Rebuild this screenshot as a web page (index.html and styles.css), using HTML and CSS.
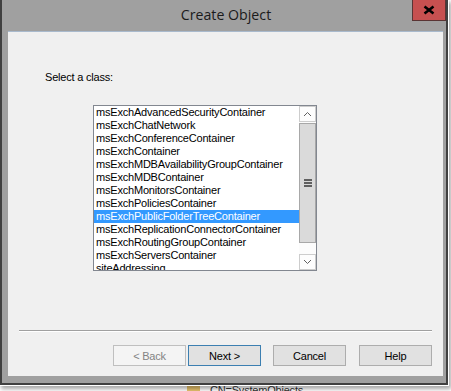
FILE: index.html
```html
<!DOCTYPE html>
<html lang="en">
<head>
    <meta charset="UTF-8">
    <meta name="viewport" content="width=device-width, initial-scale=1.0">
    <title>Create Object</title>
    <link rel="stylesheet" href="styles.css">
</head>
<body>
    <!-- Dialog window -->
    <div class="window">
        <div class="titlebar">
            <span class="title">Create Object</span>
            <button class="close" aria-label="Close">
                <svg width="34" height="21" viewBox="0 0 34 21">
                    <path d="M12.5 7.5 L21.5 14.5 M21.5 7.5 L12.5 14.5" stroke="#000" stroke-width="2.6" fill="none"/>
                </svg>
            </button>
        </div>

        <div class="panel">
            <div class="label">Select a class:</div>

            <div class="listbox">
                <ul class="items">
                    <li>msExchAdvancedSecurityContainer</li>
                    <li>msExchChatNetwork</li>
                    <li>msExchConferenceContainer</li>
                    <li>msExchContainer</li>
                    <li>msExchMDBAvailabilityGroupContainer</li>
                    <li>msExchMDBContainer</li>
                    <li>msExchMonitorsContainer</li>
                    <li>msExchPoliciesContainer</li>
                    <li class="selected">msExchPublicFolderTreeContainer</li>
                    <li>msExchReplicationConnectorContainer</li>
                    <li>msExchRoutingGroupContainer</li>
                    <li>msExchServersContainer</li>
                    <li>siteAddressing</li>
                </ul>
                <div class="scrollbar">
                    <div class="arrow">
                        <svg width="7" height="4" viewBox="0 0 7 4">
                            <polyline points="0,4 3.5,0.5 7,4" stroke="#606060" stroke-width="1" fill="none"/>
                        </svg>
                    </div>
                    <div class="thumb">
                        <svg width="8" height="8" viewBox="0 0 8 8">
                            <rect x="0" y="0" width="8" height="2" fill="#606060"/>
                            <rect x="0" y="3" width="8" height="2" fill="#606060"/>
                            <rect x="0" y="6" width="8" height="2" fill="#606060"/>
                        </svg>
                    </div>
                    <div class="arrow down">
                        <svg width="7" height="4" viewBox="0 0 7 4">
                            <polyline points="0,0 3.5,3.5 7,0" stroke="#606060" stroke-width="1" fill="none"/>
                        </svg>
                    </div>
                </div>
            </div>

            <div class="separator"></div>

            <div class="buttons">
                <button class="btn" disabled>&lt; Back</button>
                <button class="btn default">Next &gt;</button>
                <button class="btn cancel">Cancel</button>
                <button class="btn help">Help</button>
            </div>
        </div>
    </div>

    <!-- Bit of the window behind -->
    <div class="behind">
        <span class="folder"></span>
        <span class="behind-text">CN=SystemObjects</span>
    </div>
</body>
</html>
```

FILE: styles.css
```css
/* Reset */
* {
    margin: 0;
    padding: 0;
    box-sizing: border-box;
}

body {
    font-family: "Liberation Sans", Arial, sans-serif;
    font-size: 11px;
    letter-spacing: -0.2px;
    background-color: #fff;
    color: #000;
    overflow: hidden;
}

/* Window frame */
.window {
    width: 448px;
    height: 385px;
    background-color: #a0a0a0;
    border: 2px solid #404040;
    border-top: none;
    padding: 0 3px 7px 6px;
    display: flex;
    flex-direction: column;
    box-shadow: 0 0 0 1px #fff, 2px 3px 4px 1px rgba(0, 0, 0, 0.35);
    position: relative;
    z-index: 1;
}

.titlebar {
    height: 31px;
    position: relative;
    margin-left: -6px;
    margin-right: -3px;
    text-align: center;
    padding-left: 4px;
}

.title {
    font-family: "Open Sans", sans-serif;
    font-size: 14.2px;
    letter-spacing: 0;
    line-height: 30px;
    color: #1b1b1b;
}

.close {
    position: absolute;
    top: 0;
    right: 0;
    width: 34px;
    height: 21px;
    background-color: #c75050;
    border: 1px solid #5a3434;
    border-top: none;
}

.close svg {
    display: block;
    margin: -1px 0 0 -1px;
}

/* Client area */
.panel {
    flex: 1;
    background-color: #f0f0f0;
    border-top: 1px solid #a9bacd;
    padding: 39px 11px 10px 11px;
    display: flex;
    flex-direction: column;
}

.label {
    line-height: 13px;
    margin-left: 26px;
}

/* List box */
.listbox {
    width: 224px;
    height: 166px;
    margin: 21px 0 0 74px;
    border: 1px solid #828790;
    background-color: #fff;
    display: flex;
}

.items {
    list-style: none;
    flex: 1;
    overflow: hidden;
}

.items li {
    height: 13px;
    line-height: 13px;
    padding-left: 2px;
    white-space: nowrap;
}

.items li.selected {
    background-color: #3399ff;
    color: #fff;
}

.scrollbar {
    width: 17px;
    display: flex;
    flex-direction: column;
    background-color: #fcfcfc;
}

.arrow {
    height: 16px;
    border: 1px solid #cdcdcd;
    background-color: #fdfdfd;
    display: flex;
    align-items: center;
    justify-content: center;
}

.arrow svg {
    display: block;
}

.thumb {
    height: 120px;
    margin: 1px 0 11px;
    border: 1px solid #a8a8a8;
    background-color: #dadada;
    display: flex;
    align-items: center;
    justify-content: center;
}

.thumb svg {
    display: block;
    margin-left: 1px;
}

/* Bottom */
.separator {
    margin-top: auto;
    height: 2px;
    border-top: 1px solid #a0a0a0;
    border-bottom: 1px solid #fff;
}

.buttons {
    display: flex;
    justify-content: flex-end;
    margin-top: 13px;
}

.btn {
    width: 73px;
    height: 21px;
    font-family: inherit;
    font-size: 11px;
    letter-spacing: -0.2px;
    color: #000;
    background-color: #e1e1e1;
    border: 1px solid #adadad;
}

.btn:disabled {
    color: #838383;
    background-color: #f4f4f4;
    border-color: #bfbfbf;
}

.btn.default {
    margin-left: 2px;
    border-color: #3c7fb1;
}

.btn.cancel {
    margin-left: 12px;
}

.btn.help {
    margin-left: 13px;
}

/* Window behind the dialog */
.behind {
    height: 6px;
    overflow: hidden;
    display: flex;
    align-items: flex-start;
    padding-left: 187px;
    margin-top: 1px;
}

.folder {
    width: 13px;
    height: 6px;
    background-color: #e9c46e;
}

.behind-text {
    margin-left: 10px;
    line-height: 9px;
    color: #333;
}
```
